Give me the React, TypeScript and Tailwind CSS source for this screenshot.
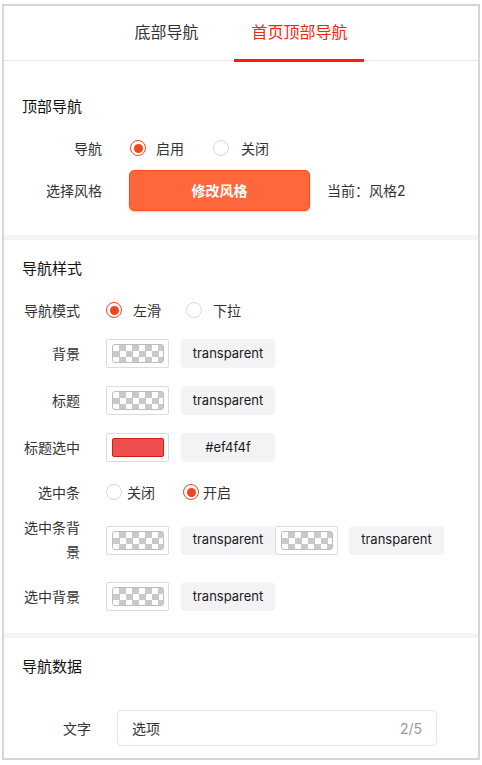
import React from "react";

const font = { fontFamily: 'Inter, "Noto Sans CJK SC", sans-serif' };

function Radio({ on }: { on?: boolean }) {
  return on ? (
    <div className="flex h-[16px] w-[16px] shrink-0 items-center justify-center rounded-full border-[1.5px] border-[#f4421f] bg-white">
      <div className="h-[9px] w-[9px] rounded-full bg-[#f4421f]" />
    </div>
  ) : (
    <div className="h-[16px] w-[16px] shrink-0 rounded-full border border-[#d9d9d9] bg-white" />
  );
}

function Swatch({ color }: { color?: string }) {
  return (
    <div className="flex h-[29px] w-[63px] shrink-0 items-center justify-center rounded-[2px] border border-[#dcdcdc] bg-white">
      {color ? (
        <div className="h-[19px] w-[52px] rounded-[2px] border border-[#d21c1c] bg-[#ef4f4f]" />
      ) : (
        <div className="h-[19px] w-[52px] rounded-[3px] border border-[#bdbdbd] bg-[conic-gradient(#c9c9c9_25%,#ffffff_0_50%,#c9c9c9_0_75%,#ffffff_0)] bg-[length:13px_12px]" />
      )}
    </div>
  );
}

function ValueBox({ text, w = "w-[94px]" }: { text: string; w?: string }) {
  return (
    <div className={`flex h-[29px] ${w} shrink-0 items-center justify-center rounded-[4px] bg-[#f3f3f6] text-[13px] text-[#1a1a1a]`}>
      {text}
    </div>
  );
}

function ColorRow({ label, color, value }: { label: string; color?: string; value: string }) {
  return (
    <div className="flex items-center">
      <div className="w-[58px] text-right text-[14px] leading-[24px] text-[#333]">{label}</div>
      <div className="ml-[26px] flex items-center">
        <Swatch color={color} />
        <div className="ml-[12px]">
          <ValueBox text={value} />
        </div>
      </div>
    </div>
  );
}

export default function App() {
  return (
    <div className="min-h-[765px] bg-white pl-[2px] pt-[4px]" style={font}>
      <div className="h-[756px] w-[478px] overflow-hidden border-2 border-[#d6d6d6] bg-white">
        {/* Tabs */}
        <div className="flex h-[55px] border-b border-[#e6e6e6] pl-[96px]">
          <div className="w-[133px] pt-[15px] text-center text-[16px] leading-[22px] text-[#333]">底部导航</div>
          <div className="relative w-[133px] pt-[15px] text-center text-[16px] leading-[22px] text-[#f5260f]">
            首页顶部导航
            <div className="absolute bottom-[-2px] left-[1px] h-[3px] w-[130px] bg-[#fa1d0c]" />
          </div>
        </div>

        {/* Section 1 */}
        <div className="pb-[24px] pl-[18px] pt-[36px]">
          <div className="text-[15px] leading-[20px] text-[#111]">顶部导航</div>
          <div className="mt-[21px] flex h-[20px] items-center text-[14px] text-[#333]">
            <div className="w-[80px] text-right">导航</div>
            <div className="ml-[28px] flex items-center">
              <Radio on />
              <span className="ml-[10px]">启用</span>
              <div className="ml-[29px] flex"><Radio /></div>
              <span className="ml-[12px]">关闭</span>
            </div>
          </div>
          <div className="mt-[12px] flex items-center text-[14px] text-[#333]">
            <div className="w-[80px] text-right">选择风格</div>
            <button className="ml-[27px] flex h-[41px] w-[181px] items-center justify-center rounded-[5px] border border-[#ff4a1f] bg-[#fe673b] text-[14px] font-bold text-white shadow-[0_1px_2px_rgba(255,80,30,0.3)]">
              修改风格
            </button>
            <div className="ml-[17px]">当前：风格2</div>
          </div>
        </div>

        <div className="h-[5px] bg-[#f4f4f6]" />

        {/* Section 2 */}
        <div className="pb-[22px] pl-[18px] pt-[19px]">
          <div className="text-[15px] leading-[20px] text-[#111]">导航样式</div>
          <div className="mt-[21px] flex h-[20px] items-center text-[14px] text-[#333]">
            <div className="w-[58px] text-right">导航模式</div>
            <div className="ml-[26px] flex items-center">
              <Radio on />
              <span className="ml-[11px]">左滑</span>
              <div className="ml-[25px] flex"><Radio /></div>
              <span className="ml-[11px]">下拉</span>
            </div>
          </div>
          <div className="mt-[19px]">
            <ColorRow label="背景" value="transparent" />
          </div>
          <div className="mt-[18px]">
            <ColorRow label="标题" value="transparent" />
          </div>
          <div className="mt-[18px]">
            <ColorRow label="标题选中" color="#ef4f4f" value="#ef4f4f" />
          </div>
          <div className="mt-[20px] flex h-[20px] items-center text-[14px] text-[#333]">
            <div className="w-[58px] text-right">选中条</div>
            <div className="ml-[26px] flex items-center">
              <Radio />
              <span className="ml-[5px]">关闭</span>
              <div className="ml-[28px] flex"><Radio on /></div>
              <span className="ml-[4px]">开启</span>
            </div>
          </div>
          <div className="mt-[14px] flex items-center">
            <div className="w-[58px] text-right text-[14px] leading-[24px] text-[#333]">选中条背景</div>
            <div className="ml-[26px] flex items-center">
              <Swatch />
              <div className="ml-[12px]">
                <ValueBox text="transparent" />
              </div>
              <Swatch />
              <div className="ml-[11px]">
                <ValueBox text="transparent" w="w-[95px]" />
              </div>
            </div>
          </div>
          <div className="mt-[18px]">
            <ColorRow label="选中背景" value="transparent" />
          </div>
        </div>

        <div className="h-[5px] bg-[#f4f4f6]" />

        {/* Section 3 */}
        <div className="pl-[18px] pt-[19px]">
          <div className="text-[15px] leading-[20px] text-[#111]">导航数据</div>
          <div className="mt-[33px] flex items-center text-[14px] text-[#333]">
            <div className="w-[69px] text-right">文字</div>
            <div className="ml-[26px] flex h-[36px] w-[320px] items-center justify-between rounded-[4px] border border-[#e6e6e6] px-[14px]">
              <span>选项</span>
              <span className="text-[#999]">2/5</span>
            </div>
          </div>
        </div>
      </div>
    </div>
  );
}
